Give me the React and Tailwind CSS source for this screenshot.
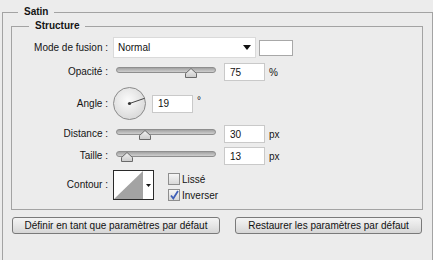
import React from "react";

const font = { fontFamily: '"Liberation Sans", Arial, sans-serif' };

function Label({ children }) {
  return <div className="w-[96px] text-right text-[10px] text-[#141414] leading-[12px]">{children}</div>;
}

function Slider({ pos }) {
  return (
    <div className="relative ml-[5px] w-[106px] h-[18px]">
      <div className="absolute left-[3px] top-[4px] w-[100px] h-[6px] rounded-full border border-[#8e8e8e] bg-[linear-gradient(#a2a2a2,#cfcfcf)]" />
      <svg className="absolute top-[5px]" style={{ left: 3 + pos - 6 }} width="12" height="10" viewBox="0 0 12 10">
        <defs>
          <linearGradient id={"tg" + pos} x1="0" y1="0" x2="0" y2="1">
            <stop offset="0" stopColor="#f4f4f4" />
            <stop offset="1" stopColor="#cbcbcb" />
          </linearGradient>
        </defs>
        <polygon points="0.5,9.5 0.5,5.5 6,0.5 11.5,5.5 11.5,9.5" fill={"url(#tg" + pos + ")"} stroke="#6a6a6a" />
      </svg>
    </div>
  );
}

function NumField({ value, className = "" }) {
  return (
    <div className={"w-[41px] h-[18px] bg-white border border-[#c9c9c9] pl-[5px] flex items-center text-[10px] text-[#111] " + className}>
      {value}
    </div>
  );
}

function Checkbox({ checked }) {
  return (
    <div className="w-[12px] h-[12px] border border-[#8e8e8e] bg-[linear-gradient(#f6f6f6,#d8d8d8)] relative">
      {checked && (
        <svg className="absolute left-[0px] top-[-1px]" width="11" height="12" viewBox="0 0 11 12">
          <path d="M2 6.5 L4.3 9.5 L9 2" fill="none" stroke="#3f5fb8" strokeWidth="1.8" />
        </svg>
      )}
    </div>
  );
}

export default function App() {
  return (
    <div className="w-[433px] h-[260px] bg-[#ececec] overflow-hidden text-[#141414]" style={font}>
      <div className="ml-[2px] mt-[12px] w-[431px] h-[270px] border border-[#a3a3a3] relative pl-[8px] pt-[13px]">
        <span className="absolute left-[15px] top-[-8px] px-[6px] bg-[#ececec] text-[10px] font-bold leading-[14px]">Satin</span>

        <div className="w-[412px] h-[184px] border border-[#a3a3a3] relative flex flex-col">
          <span className="absolute left-[17px] top-[-8px] px-[6px] bg-[#ececec] text-[10px] font-bold leading-[14px]">Structure</span>

          {/* Mode de fusion */}
          <div className="flex items-center mt-[10px] h-[21px]">
            <Label>Mode de fusion :</Label>
            <div className="ml-[5px] w-[143px] h-[21px] bg-white border border-[#dadada] flex items-center justify-between pl-[4px] pr-[4px]">
              <span className="text-[10px] text-[#111]">Normal</span>
              <svg width="8" height="5" viewBox="0 0 8 5">
                <polygon points="0,0 8,0 4,5" fill="#111" />
              </svg>
            </div>
            <div className="ml-[3px] w-[34px] h-[16px] bg-white border border-[#a8a8a8]" />
          </div>

          {/* Opacité */}
          <div className="flex items-center mt-[5px] h-[18px]">
            <Label>Opacité :</Label>
            <Slider pos={75} />
            <NumField value="75" className="ml-[5px]" />
            <span className="ml-[4px] text-[10px]">%</span>
          </div>

          {/* Angle */}
          <div className="flex items-center mt-[6px] h-[33px]">
            <Label>Angle :</Label>
            <svg className="ml-[5px]" width="34" height="34" viewBox="0 0 34 34">
              <defs>
                <radialGradient id="dial" cx="0.45" cy="0.4" r="0.6">
                  <stop offset="0" stopColor="#fbfbfb" />
                  <stop offset="1" stopColor="#d9d9d9" />
                </radialGradient>
              </defs>
              <circle cx="16.5" cy="16.5" r="16" fill="url(#dial)" stroke="#8a8a8a" />
              <line x1="16.5" y1="16.5" x2="31.6" y2="11.3" stroke="#444" strokeWidth="1" />
              <circle cx="16.5" cy="16.5" r="1.6" fill="#333" />
            </svg>
            <NumField value="19" className="ml-[5px]" />
            <span className="ml-[4px] text-[10px] self-start mt-[6px]">°</span>
          </div>

          {/* Distance */}
          <div className="flex items-center mt-[5px] h-[18px]">
            <Label>Distance :</Label>
            <Slider pos={29} />
            <NumField value="30" className="ml-[5px]" />
            <span className="ml-[4px] text-[10px]">px</span>
          </div>

          {/* Taille */}
          <div className="flex items-center mt-[4px] h-[18px]">
            <Label>Taille :</Label>
            <Slider pos={11} />
            <NumField value="13" className="ml-[5px]" />
            <span className="ml-[4px] text-[10px]">px</span>
          </div>

          {/* Contour */}
          <div className="flex items-center mt-[5px] h-[30px]">
            <Label>Contour :</Label>
            <div className="ml-[5px] w-[41px] h-[30px] border border-[#2a2a2a] bg-white flex">
              <svg width="29" height="28" viewBox="0 0 29 28">
                <polygon points="0,28 29,0 29,28" fill="#a3a3a3" />
              </svg>
              <div className="flex-1 flex items-center justify-center">
                <svg width="5" height="3" viewBox="0 0 5 3">
                  <polygon points="0,0 5,0 2.5,3" fill="#111" />
                </svg>
              </div>
            </div>
            <div className="ml-[14px] self-start pt-[3px] flex flex-col gap-[4px]">
              <div className="flex items-center gap-[2px] h-[12px]">
                <Checkbox />
                <span className="text-[10px]">Lissé</span>
              </div>
              <div className="flex items-center gap-[2px] h-[12px]">
                <Checkbox checked />
                <span className="text-[10px]">Inverser</span>
              </div>
            </div>
          </div>
        </div>

        <div className="flex mt-[7px] ml-[1px] gap-[15px]">
          <button className="w-[208px] h-[17px] rounded-[3px] border border-[#7a7a7a] bg-[linear-gradient(#f4f4f4,#e6e6e6_50%,#d6d6d6)] text-[10px] text-[#111] leading-[14px]">
            Définir en tant que paramètres par défaut
          </button>
          <button className="w-[187px] h-[17px] rounded-[3px] border border-[#7a7a7a] bg-[linear-gradient(#f4f4f4,#e6e6e6_50%,#d6d6d6)] text-[10px] text-[#111] leading-[14px]">
            Restaurer les paramètres par défaut
          </button>
        </div>
      </div>
    </div>
  );
}
